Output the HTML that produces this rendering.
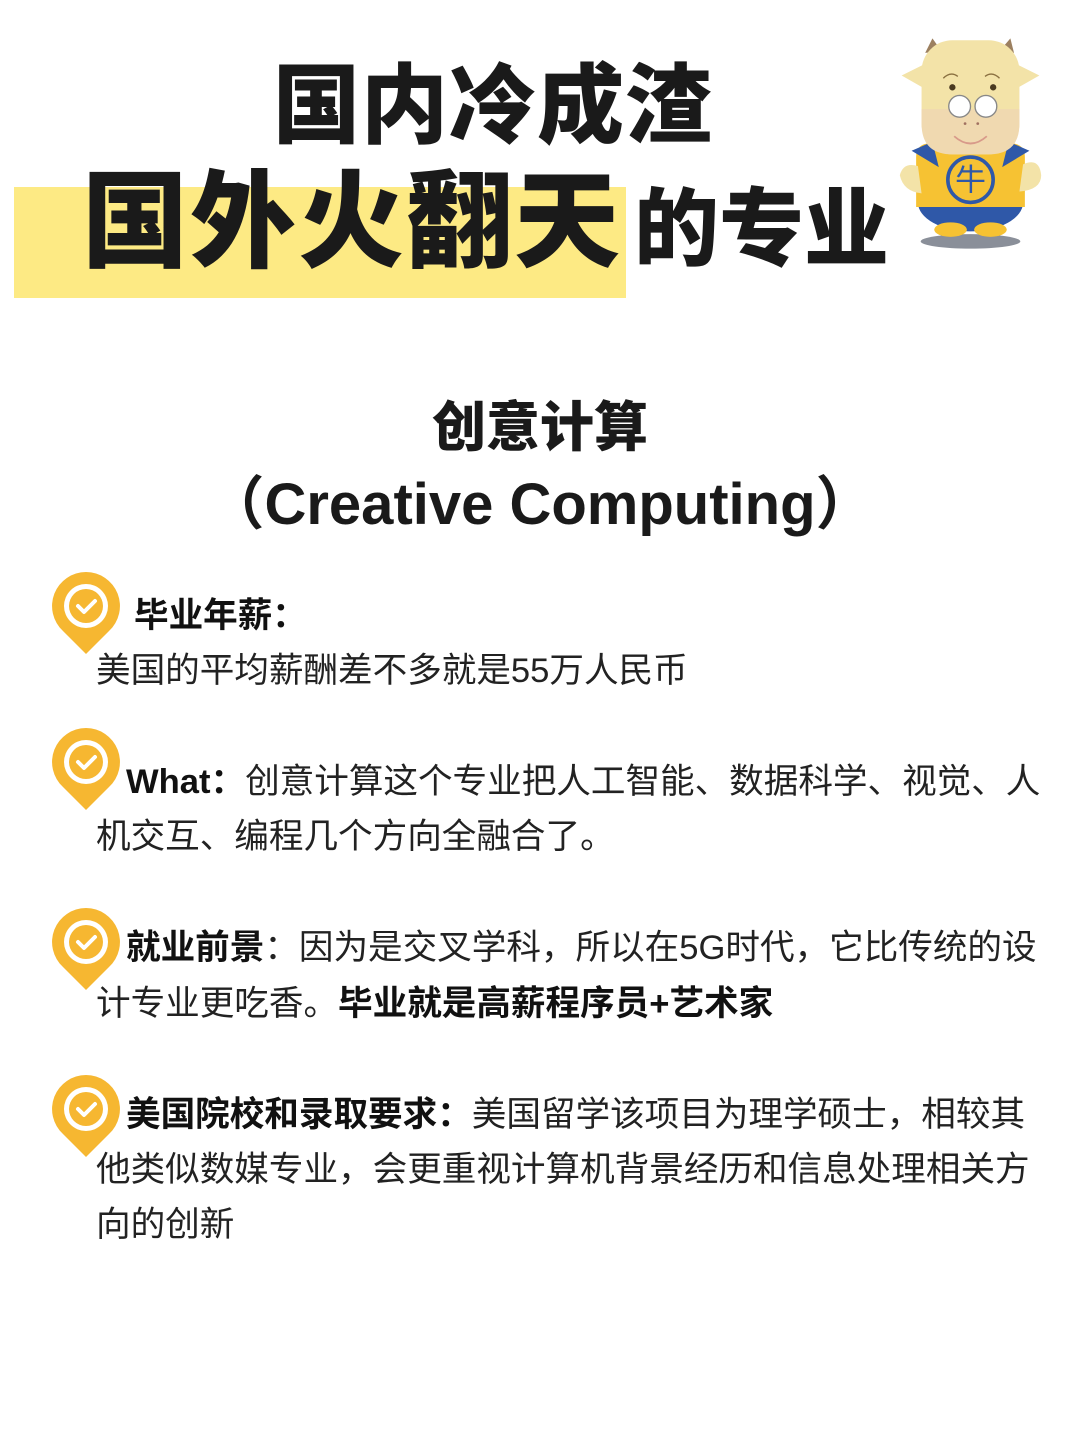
<!DOCTYPE html>
<html><head><meta charset="utf-8"><style>
body{margin:0;width:1080px;height:1440px;background:#fff;position:relative;overflow:hidden;font-family:"Liberation Sans","Noto Sans CJK SC",sans-serif;color:#1a1a1a}
.a{position:absolute;white-space:nowrap}
.t{font-weight:900;font-family:"Noto Sans CJK SC",sans-serif}
.b{font-size:34.6px;line-height:40px;color:#222}
.b b{font-weight:700;color:#111}
svg.pin{position:absolute;width:70px;height:84px}
</style></head><body>
<div class="a" style="left:14px;top:187px;width:612px;height:111px;background:#fdea84"></div>
<div class="a t" style="left:273px;top:44px;font-size:87px;line-height:110px;letter-spacing:1px">国内冷成渣</div>
<div class="a t" style="left:82px;top:153px;font-size:106px;line-height:120px;letter-spacing:2px">国外火翻天</div>
<div class="a t" style="left:634px;top:168px;font-size:85px;line-height:110px">的专业</div>

<svg class="a" style="left:898px;top:26px" width="145" height="235" viewBox="0 0 160 240">
<ellipse cx="80" cy="228" rx="55" ry="8" fill="#8a8f99"/>
<path d="M30 20 L38 4 L48 18Z M112 18 L124 4 L128 20Z" fill="#9c8060"/>
<path d="M4 45 L34 30 L34 62Z M156 45 L126 30 L126 62Z" fill="#f3e3a8"/>
<ellipse cx="80" cy="185" rx="58" ry="32" fill="#2f58a8"/>
<path d="M20 135 Q20 118 40 120 L120 120 Q140 118 140 135 L140 190 L20 190Z" fill="#f6c233"/>
<path d="M15 128 L38 118 L45 146 Z M145 128 L122 118 L115 146Z" fill="#2f58a8"/>
<path d="M2 155 Q6 140 22 145 L26 175 Q6 173 2 155Z M158 155 Q156 135 138 143 L134 173 Q158 171 158 155Z" fill="#f3e3a8"/>
<rect x="26" y="6" width="108" height="126" rx="34" fill="#f3e3a8"/>
<path d="M26 82 L134 82 L134 98 Q134 132 100 132 L60 132 Q26 132 26 98Z" fill="#f0d9b0"/>
<path d="M50 48 Q58 40 66 46 M96 46 Q104 40 112 48" stroke="#8a7040" stroke-width="1.5" fill="none"/>
<circle cx="60" cy="58" r="3.5" fill="#4a3a20"/><circle cx="105" cy="58" r="3.5" fill="#4a3a20"/>
<circle cx="68" cy="79" r="12" fill="#fff" stroke="#888" stroke-width="1.5"/><circle cx="97" cy="79" r="12" fill="#fff" stroke="#888" stroke-width="1.5"/>
<circle cx="74" cy="98" r="1.5" fill="#a07060"/><circle cx="88" cy="98" r="1.5" fill="#a07060"/>
<path d="M62 112 Q80 128 98 112" stroke="#d89a8a" stroke-width="2" fill="none"/>
<circle cx="80" cy="160" r="25" fill="none" stroke="#2f58a8" stroke-width="4"/>
<text x="80" y="172" font-size="34" text-anchor="middle" fill="#2f58a8" font-family="Noto Sans CJK SC,sans-serif">牛</text>
<ellipse cx="58" cy="215" rx="18" ry="8" fill="#f6c233"/><ellipse cx="102" cy="215" rx="18" ry="8" fill="#f6c233"/>
</svg>

<div class="a t" style="left:0;width:1080px;text-align:center;top:388px;font-size:54px;line-height:70px">创意计算</div>
<div class="a" style="left:0;width:1080px;text-align:center;top:470px;font-size:58px;line-height:70px;font-weight:700">（Creative Computing）</div>

<svg class="pin" style="left:51px;top:572px" viewBox="0 0 70 84"><path d="M35 0 A34 34 0 0 1 58 59 L35 82 L12 59 A34 34 0 0 1 35 0Z" fill="#f6b731"/><circle cx="35" cy="34" r="22" fill="#fff"/><circle cx="35" cy="34" r="17" fill="#f6b731"/><path d="M27 34 L33 40 L44 29" stroke="#fff" stroke-width="4" fill="none" stroke-linecap="round" stroke-linejoin="round"/></svg>
<svg class="pin" style="left:51px;top:728px" viewBox="0 0 70 84"><path d="M35 0 A34 34 0 0 1 58 59 L35 82 L12 59 A34 34 0 0 1 35 0Z" fill="#f6b731"/><circle cx="35" cy="34" r="22" fill="#fff"/><circle cx="35" cy="34" r="17" fill="#f6b731"/><path d="M27 34 L33 40 L44 29" stroke="#fff" stroke-width="4" fill="none" stroke-linecap="round" stroke-linejoin="round"/></svg>
<svg class="pin" style="left:51px;top:908px" viewBox="0 0 70 84"><path d="M35 0 A34 34 0 0 1 58 59 L35 82 L12 59 A34 34 0 0 1 35 0Z" fill="#f6b731"/><circle cx="35" cy="34" r="22" fill="#fff"/><circle cx="35" cy="34" r="17" fill="#f6b731"/><path d="M27 34 L33 40 L44 29" stroke="#fff" stroke-width="4" fill="none" stroke-linecap="round" stroke-linejoin="round"/></svg>
<svg class="pin" style="left:51px;top:1075px" viewBox="0 0 70 84"><path d="M35 0 A34 34 0 0 1 58 59 L35 82 L12 59 A34 34 0 0 1 35 0Z" fill="#f6b731"/><circle cx="35" cy="34" r="22" fill="#fff"/><circle cx="35" cy="34" r="17" fill="#f6b731"/><path d="M27 34 L33 40 L44 29" stroke="#fff" stroke-width="4" fill="none" stroke-linecap="round" stroke-linejoin="round"/></svg>

<div class="a b" style="left:134px;top:596px"><b>毕业年薪：</b></div>
<div class="a b" style="left:96px;top:651px">美国的平均薪酬差不多就是55万人民币</div>

<div class="a b" style="left:126px;top:762px"><b>What：</b>创意计算这个专业把人工智能、数据科学、视觉、人</div>
<div class="a b" style="left:96px;top:817px">机交互、编程几个方向全融合了。</div>

<div class="a b" style="left:126px;top:928px"><b>就业前景</b>：因为是交叉学科，所以在5G时代，它比传统的设</div>
<div class="a b" style="left:96px;top:984px">计专业更吃香。<b>毕业就是高薪程序员+艺术家</b></div>

<div class="a b" style="left:126px;top:1095px"><b>美国院校和录取要求：</b>美国留学该项目为理学硕士，相较其</div>
<div class="a b" style="left:96px;top:1150px">他类似数媒专业，会更重视计算机背景经历和信息处理相关方</div>
<div class="a b" style="left:96px;top:1205px">向的创新</div>
</body></html>
